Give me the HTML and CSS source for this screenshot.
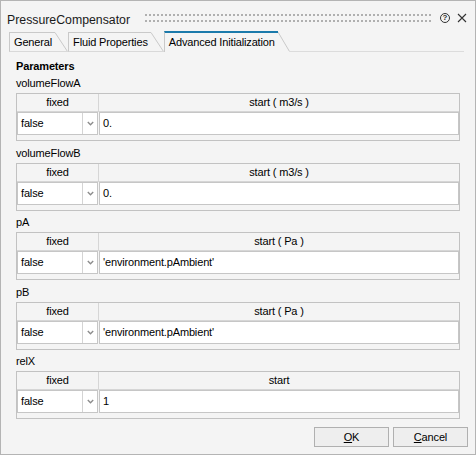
FILE: index.html
```html
<!DOCTYPE html>
<html>
<head>
<meta charset="utf-8">
<link rel="stylesheet" href="styles.css">
</head>
<body>
<div class="window">
  <div class="titlebar">
    <span class="title">PressureCompensator</span>
    <div class="grip"></div>
    <span class="help">?</span>
    <svg class="close" width="10" height="10" viewBox="0 0 10 10"><path d="M1 1L9 9M9 1L1 9" stroke="#333" stroke-width="1.1" fill="none"/></svg>
  </div>
  <div class="tabs">
    <div class="tab"><span class="tab-label">General</span><svg class="slant" width="13" height="20" viewBox="0 0 13 20"><path d="M0 0.5L12.5 19.5" stroke="#c9c9c9" fill="none"/><path d="M0 19.5H13" stroke="#d9d9d9" fill="none"/></svg></div>
    <div class="tab"><span class="tab-label">Fluid Properties</span><svg class="slant" width="13" height="20" viewBox="0 0 13 20"><path d="M0 0.5L12.5 19.5" stroke="#c9c9c9" fill="none"/><path d="M0 19.5H13" stroke="#d9d9d9" fill="none"/></svg></div>
    <div class="tab tab-active"><span class="tab-label">Advanced Initialization</span><svg class="slant" width="12" height="21" viewBox="0 0 12 21"><path d="M0 1L11.5 20.5" stroke="#c9c9c9" fill="none"/></svg></div>
    <div class="tab-fill"></div>
  </div>
  <div class="pane">
    <div class="section-title">Parameters</div>

    <div class="group">
      <div class="group-label">volumeFlowA</div>
      <div class="table">
        <div class="thead"><div class="th th-fixed">fixed</div><div class="th th-start">start ( m3/s )</div></div>
        <div class="trow"><div class="combo"><span class="combo-text">false</span><span class="combo-arrow"><svg width="7" height="5" viewBox="0 0 7 5"><path d="M0.8 1L3.5 3.7L6.2 1" stroke="#8c8c8c" stroke-width="1.4" fill="none"/></svg></span></div><div class="value">0.</div></div>
      </div>
    </div>

    <div class="group">
      <div class="group-label">volumeFlowB</div>
      <div class="table">
        <div class="thead"><div class="th th-fixed">fixed</div><div class="th th-start">start ( m3/s )</div></div>
        <div class="trow"><div class="combo"><span class="combo-text">false</span><span class="combo-arrow"><svg width="7" height="5" viewBox="0 0 7 5"><path d="M0.8 1L3.5 3.7L6.2 1" stroke="#8c8c8c" stroke-width="1.4" fill="none"/></svg></span></div><div class="value">0.</div></div>
      </div>
    </div>

    <div class="group">
      <div class="group-label">pA</div>
      <div class="table">
        <div class="thead"><div class="th th-fixed">fixed</div><div class="th th-start">start ( Pa )</div></div>
        <div class="trow"><div class="combo"><span class="combo-text">false</span><span class="combo-arrow"><svg width="7" height="5" viewBox="0 0 7 5"><path d="M0.8 1L3.5 3.7L6.2 1" stroke="#8c8c8c" stroke-width="1.4" fill="none"/></svg></span></div><div class="value">'environment.pAmbient'</div></div>
      </div>
    </div>

    <div class="group">
      <div class="group-label">pB</div>
      <div class="table">
        <div class="thead"><div class="th th-fixed">fixed</div><div class="th th-start">start ( Pa )</div></div>
        <div class="trow"><div class="combo"><span class="combo-text">false</span><span class="combo-arrow"><svg width="7" height="5" viewBox="0 0 7 5"><path d="M0.8 1L3.5 3.7L6.2 1" stroke="#8c8c8c" stroke-width="1.4" fill="none"/></svg></span></div><div class="value">'environment.pAmbient'</div></div>
      </div>
    </div>

    <div class="group">
      <div class="group-label">relX</div>
      <div class="table">
        <div class="thead"><div class="th th-fixed">fixed</div><div class="th th-start">start</div></div>
        <div class="trow"><div class="combo"><span class="combo-text">false</span><span class="combo-arrow"><svg width="7" height="5" viewBox="0 0 7 5"><path d="M0.8 1L3.5 3.7L6.2 1" stroke="#8c8c8c" stroke-width="1.4" fill="none"/></svg></span></div><div class="value">1</div></div>
      </div>
    </div>
  </div>
  <div class="footer">
    <button class="btn"><u>O</u>K</button>
    <button class="btn"><u>C</u>ancel</button>
  </div>
</div>
</body>
</html>
```

FILE: styles.css
```css
* { box-sizing: border-box; }
html, body { margin: 0; padding: 0; }
body {
  width: 476px;
  height: 455px;
  overflow: hidden;
  font-family: "Liberation Sans", Arial, sans-serif;
  font-size: 11px;
  letter-spacing: -0.15px;
  color: #000;
  background: #f4f4f4;
}
.window {
  width: 476px;
  height: 455px;
  border: 1px solid #b4b4b4;
  background: #f4f4f4;
  display: flex;
  flex-direction: column;
}
.titlebar {
  height: 30px;
  padding: 8px 8px 0 6px;
  display: flex;
  align-items: center;
}
.title {
  font-size: 12.3px;
  letter-spacing: 0;
  color: #1a1a1a;
  white-space: nowrap;
}
.grip {
  flex: 1;
  align-self: flex-start;
  height: 12px;
  margin: 3px 9px 0 14px;
  background-image: radial-gradient(circle at center, #9c9c9c 0, #9c9c9c 0.6px, transparent 1.1px);
  background-size: 4px 6px;
}
.help {
  align-self: flex-start;
  margin-top: 4px;
  width: 10px;
  height: 10px;
  border: 1px solid #333;
  border-radius: 50%;
  font-size: 8px;
  font-weight: bold;
  line-height: 8px;
  letter-spacing: 0;
  text-align: center;
  color: #333;
}
.close {
  align-self: flex-start;
  margin: 4px 0 0 7px;
}
.tabs {
  height: 21px;
  display: flex;
  align-items: flex-end;
  padding-left: 8px;
}
.tab {
  display: flex;
  height: 20px;
}
.tab-label {
  border-top: 1px solid #c9c9c9;
  border-left: 1px solid #c9c9c9;
  border-bottom: 1px solid #d9d9d9;
  padding: 0 3px 0 4px;
  line-height: 18px;
  white-space: nowrap;
}
.slant { display: block; flex: none; }
.tab-active { height: 21px; }
.tab-active .tab-label {
  border-top: 2px solid #1b7aab;
  border-bottom: none;
  line-height: 19px;
}
.tab-fill {
  flex: 1;
  height: 21px;
  border-bottom: 1px solid #dcdcdc;
  margin-right: 11px;
}
.pane {
  padding: 0 15px;
}
.section-title {
  margin-top: 6px;
  line-height: 16px;
  font-weight: bold;
}
.group + .group { margin-top: 2.5px; }
.group-label {
  line-height: 19px;
  height: 19px;
}
.table {
  border: 1px solid #c2c2c2;
  padding-bottom: 5px;
  background: #f4f4f4;
}
.thead {
  display: flex;
  height: 18px;
  border-bottom: 1px solid #d6d6d6;
}
.th {
  line-height: 17px;
  text-align: center;
}
.th-fixed {
  width: 82px;
  border-right: 1px solid #d6d6d6;
}
.th-start { flex: 1; }
.trow {
  display: flex;
  height: 23px;
}
.combo {
  width: 81px;
  margin-right: 1px;
  display: flex;
  border: 1px solid #c6c6c6;
  background: #fff;
}
.combo-text {
  flex: 1;
  padding-left: 3px;
  line-height: 21px;
  border-right: 1px solid #d4d4d4;
}
.combo-arrow {
  width: 14px;
  display: flex;
  align-items: center;
  justify-content: center;
}
.combo-arrow svg { display: block; }
.value {
  flex: 1;
  border: 1px solid #c6c6c6;
  background: #fff;
  padding-left: 3px;
  line-height: 21px;
  white-space: nowrap;
}
.footer {
  margin-top: auto;
  display: flex;
  justify-content: flex-end;
  gap: 4px;
  padding: 0 7px 7px 0;
}
.btn {
  width: 75px;
  height: 20px;
  border: 1px solid #b0b0b0;
  background: #eeeeee;
  font-family: "Liberation Sans", Arial, sans-serif;
  font-size: 11px;
  letter-spacing: -0.15px;
  color: #000;
  padding: 0;
  margin: 0;
}
.btn u { text-decoration: underline; }
```
